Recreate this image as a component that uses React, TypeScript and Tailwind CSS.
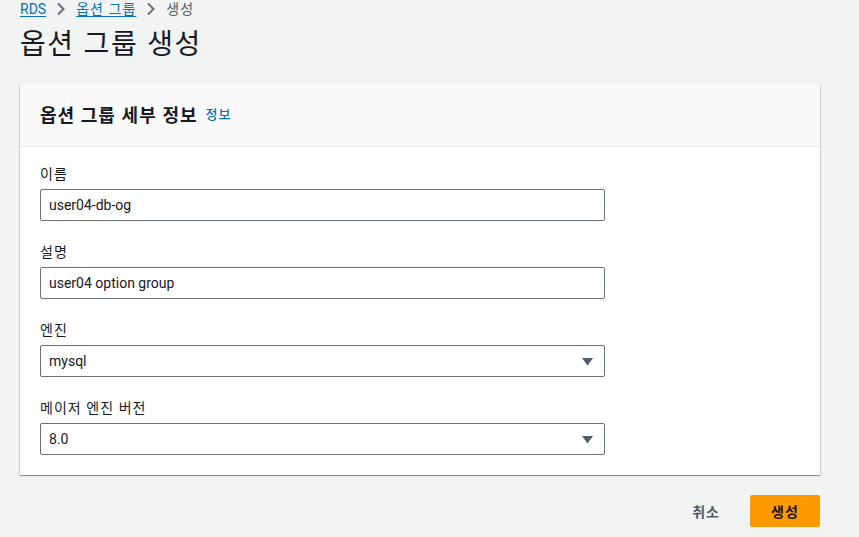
import React from 'react';

const font = { fontFamily: '"Noto Sans", "Noto Sans CJK KR", sans-serif' };
const latin = { fontFamily: 'Roboto, "Noto Sans CJK KR", sans-serif' };

const Field: React.FC<{ label: string; value: string; select?: boolean }> = ({ label, value, select }) => (
  <div className="flex flex-col gap-1">
    <label className="text-[14px] leading-[22px] tracking-[1px] text-[#16191f]">{label}</label>
    <div className="relative flex h-8 w-[565px] items-center rounded-[2px] border border-[#687078] bg-white pl-2 pr-4 text-[14px] text-[#16191f]">
      <span style={latin}>{value}</span>
      {select && (
        <svg className="absolute right-[11px] top-[12px]" width="11" height="8" viewBox="0 0 11 8">
          <path d="M0 0 H11 L5.5 7.5 Z" fill="#545b64" />
        </svg>
      )}
    </div>
  </div>
);

const Chevron = () => (
  <svg width="10" height="14" viewBox="0 0 10 14">
    <path d="M2 1.5 L7.5 7 L2 12.5" fill="none" stroke="#687078" strokeWidth="2" />
  </svg>
);

export default function App() {
  return (
    <div className="min-h-[537px] w-full bg-[#f2f3f3] px-5" style={font}>
      <nav className="flex h-[18px] items-center gap-[10px] text-[14px] leading-[18px]">
        <a className="text-[#0073bb] underline underline-offset-2" style={latin}>RDS</a>
        <Chevron />
        <a className="text-[#0073bb] tracking-[1px] underline underline-offset-2">옵션 그룹</a>
        <Chevron />
        <span className="text-[#545b64] tracking-[1px]">생성</span>
      </nav>
      <h1 className="mt-[7px] text-[28px] leading-[36px] font-normal tracking-[1.6px] text-[#16191f]">옵션 그룹 생성</h1>

      <div className="mt-[23px] w-[800px] rounded-[1px] bg-white shadow-[0_1px_1px_0_rgba(0,28,36,0.3),1px_1px_1px_0_rgba(0,28,36,0.15),-1px_1px_1px_0_rgba(0,28,36,0.15)]">
        <div className="flex h-[63px] items-center gap-2 border-b border-[#eaeded] bg-[#fafafa] px-5">
          <h2 className="text-[18px] font-bold tracking-[1px] text-[#16191f]">옵션 그룹 세부 정보</h2>
          <a className="text-[13px] font-medium tracking-[1px] text-[#0073bb]">정보</a>
        </div>
        <div className="flex flex-col gap-5 px-5 pt-4 pb-5">
          <Field label="이름" value="user04-db-og" />
          <Field label="설명" value="user04 option group" />
          <Field label="엔진" value="mysql" select />
          <Field label="메이저 엔진 버전" value="8.0" select />
        </div>
      </div>

      <div className="mt-5 flex w-[800px] items-center justify-end gap-[10px]">
        <button className="h-8 px-5 text-[14px] font-bold tracking-[1px] text-[#545b64]">취소</button>
        <button className="h-8 w-[70px] rounded-[2px] bg-[#ff9900] text-[14px] font-bold tracking-[1px] text-[#16191f]">생성</button>
      </div>
    </div>
  );
}
